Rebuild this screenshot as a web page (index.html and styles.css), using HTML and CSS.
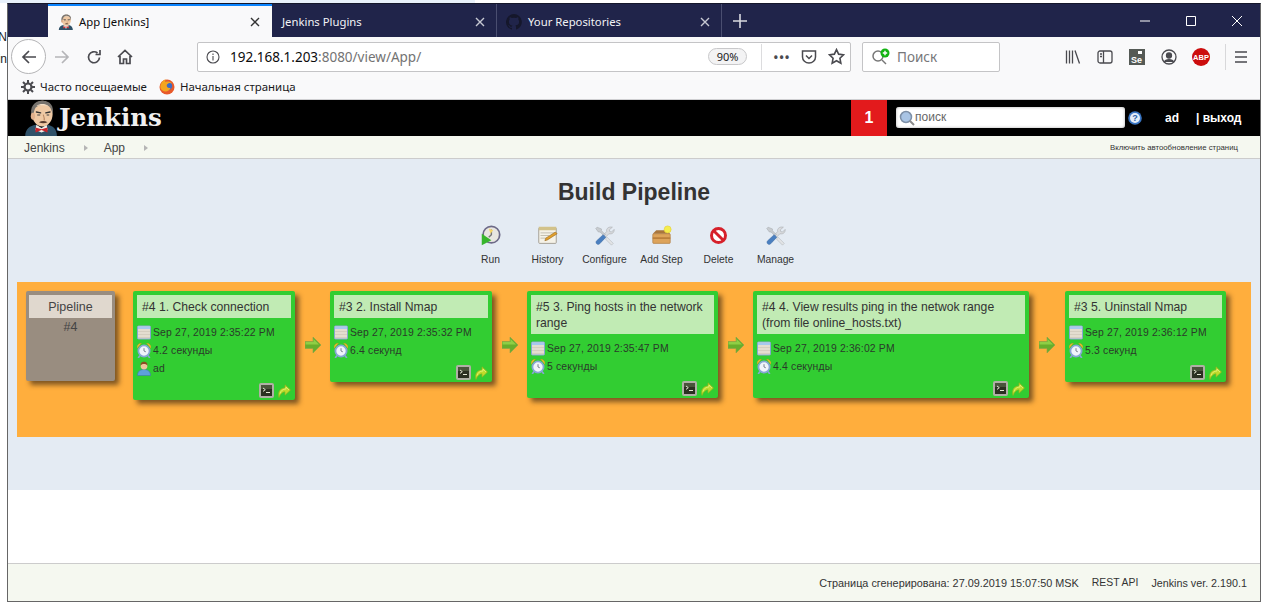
FILE: index.html
```html
<!DOCTYPE html>
<html lang="ru">
<head>
<meta charset="utf-8">
<title>App [Jenkins]</title>
<link rel="stylesheet" href="styles.css">
</head>
<body>
<svg class="defs" width="0" height="0" aria-hidden="true">
  <defs>
    <symbol id="butler" viewBox="0 0 40 42">
      <path d="M1 42c0-8 6-12 12-13l7 3 7-3c6 1 11 5 11 13z" fill="#2f5168"/>
      <path d="M14 29l6 4 6-4 1 6-7 3-7-3z" fill="#f4f1ea"/>
      <path d="M13 32l7 2 7-2v6l-7-3-7 3z" fill="#c8242b"/>
      <ellipse cx="21" cy="16" rx="12" ry="15" fill="#efc9a4"/>
      <path d="M9 21C5 8 12 1 21 1s14 6 12 16c-1-6-3-10-7-11-5-1-10 0-13 3-2 3-2 8-4 12z" fill="#77736e"/>
      <path d="M14 7c4-3 10-3 14 0-5-1-9-1-14 0z" fill="#f4dfc7"/>
      <ellipse cx="10" cy="19" rx="2.500" ry="4" fill="#e0b08c"/>
      <path d="M14 14l5 1M25 15l5-1" stroke="#333" stroke-width="1.500" stroke-linecap="round"/>
      <path d="M15 17.500h3.500M26 17.500h3" stroke="#444" stroke-width="1.200"/>
      <path d="M22 17c1 3 2 5 1 7" stroke="#b78560" stroke-width="1.200" fill="none"/>
      <path d="M17 26c3-2 7-2 10 0-3 1.500-7 1.500-10 0z" fill="#55392b"/>
    </symbol>
    <symbol id="calendar" viewBox="0 0 14 14">
      <rect x=".5" y=".5" width="13" height="13" rx="1" fill="#e4ddd0" stroke="#86a6d0"/>
      <rect x="1" y="1" width="12" height="2.500" fill="#a6c8ee"/>
      <path d="M1 6h12M1 9h12M1 12h12" stroke="#cfc7b8" stroke-width=".7"/>
    </symbol>
    <symbol id="clock" viewBox="0 0 14 15">
      <path d="M0 5.500C-.3 2.500 1.500.2 4.500 0zM14 5.500C14.300 2.500 12.500.2 9.500 0z" fill="#f0bd34" stroke="#c4951c" stroke-width=".4"/>
      <path d="M3 12.500L1.200 15M11 12.500l1.800 2.500" stroke="#86a6d4" stroke-width="1.600"/>
      <circle cx="7" cy="8" r="5.600" fill="#f0f4fa" stroke="#86a6d4" stroke-width="1.800"/>
      <path d="M7 5.200V8l1.800.8" stroke="#78808e" stroke-width="1" fill="none"/>
    </symbol>
    <symbol id="user" viewBox="0 0 14 14">
      <path d="M.5 14c0-4 2.500-6 6.500-6s6.500 2 6.500 6z" fill="#5ea0dc" stroke="#3f78b0" stroke-width=".6"/>
      <circle cx="7" cy="4.500" r="3.400" fill="#f0c49a"/>
      <path d="M3.600 4.500C3.200 1.500 5 .3 7 .3s3.800 1.200 3.400 4.200C10 3 8.500 2.600 7 2.600S4 3 3.600 4.500z" fill="#8a4d22"/>
    </symbol>
    <symbol id="console" viewBox="0 0 15 15">
      <rect width="15" height="15" rx="2" fill="#b0b0a6"/>
      <rect x="2" y="2" width="11" height="11" fill="#2b3021"/>
      <path d="M2 2h11v4H2z" fill="#4a543c"/>
      <path d="M4 5l2.300 1.700L4 8.400" stroke="#e4e8d4" stroke-width="1" fill="none"/>
      <path d="M7 9.500h4" stroke="#e4e8d4" stroke-width="1"/>
    </symbol>
    <symbol id="redo" viewBox="0 0 13 14">
      <path d="M1 13.500C-.5 7.500 2.500 4 7 4V.8l5.500 5.200L7 11.200V7.800C4.500 7.800 2.300 9.800 1 13.500z" fill="#bedc2c" stroke="#93b521" stroke-width=".7"/>
      <path d="M2 9.500C3 6.500 5 5 8 5V3l3 3" fill="none" stroke="#e6f27c" stroke-width=".8"/>
    </symbol>
    <symbol id="flow" viewBox="0 0 16 16">
      <path d="M0 4.500h8V0l8 8-8 8v-4.500H0z" fill="#68ae2c" stroke="#8aa24a" stroke-width=".6"/>
      <path d="M.5 5h8V2l5.500 5.500H.5z" fill="#8fce45"/>
    </symbol>
    <symbol id="tools" viewBox="0 0 24 24">
      <path d="M21 2.500l-3.500 3 .5 2 2 .5 3-3c.5 3-2 6-6 5L8 19.500 5 17 14.500 7.500C13.500 4 17 1.500 21 2.500z" fill="#d9dbde" stroke="#a3a7ab" stroke-width=".6"/>
      <path d="M3.500 2.500L2 4l3 4h2l4.500 4.500 1.500-1.500-4.500-4.500V4.500z" fill="#c8ccd0" stroke="#a3a7ab" stroke-width=".6"/>
      <path d="M10.500 11l3 3-7 7.500c-1 1-2.500 1-3.500 0s-1-2.500 0-3.500z" fill="#4a7fc0" stroke="#38659e" stroke-width=".5"/>
      <path d="M15 14l7 7-2 2-7-7z" fill="#e2e4e6" stroke="#a3a7ab" stroke-width=".5"/>
    </symbol>
  </defs>
</svg>

<div class="top-strip"></div>
<div class="screen">
  <div class="gutter"><span>PN</span><span>in</span></div>
  <div class="window">
    <div class="tabbar">
      <div class="tab-lead"></div>
      <div class="tab active">
        <svg class="tab-icon"><use href="#butler"/></svg>
        <span class="tab-title">App [Jenkins]</span>
        <svg class="tab-close" viewBox="0 0 10 10"><path d="M1 1l8 8M9 1l-8 8"/></svg>
      </div>
      <div class="tab">
        <span class="tab-title">Jenkins Plugins</span>
        <svg class="tab-close" viewBox="0 0 10 10"><path d="M1 1l8 8M9 1l-8 8"/></svg>
      </div>
      <div class="tab">
        <svg class="tab-icon" viewBox="0 0 16 16"><path fill="#15172b" d="M8 0a8 8 0 0 0-2.500 15.600c.4.100.5-.200.500-.400v-1.400c-2.200.500-2.700-1-2.700-1-.400-.900-.900-1.200-.900-1.200-.700-.500.100-.500.100-.500.800.100 1.200.800 1.200.800.700 1.200 1.900.900 2.300.700.100-.500.300-.900.500-1.100-1.800-.200-3.600-.900-3.600-4 0-.900.300-1.600.800-2.100-.100-.200-.400-1 .100-2.100 0 0 .700-.200 2.200.800a7.500 7.500 0 0 1 4 0c1.500-1 2.200-.800 2.200-.800.400 1.100.200 1.900.100 2.100.500.600.800 1.300.800 2.100 0 3.100-1.900 3.700-3.700 3.900.300.300.600.800.600 1.500v2.200c0 .200.100.500.600.400A8 8 0 0 0 8 0z"/></svg>
        <span class="tab-title">Your Repositories</span>
        <svg class="tab-close" viewBox="0 0 10 10"><path d="M1 1l8 8M9 1l-8 8"/></svg>
      </div>
      <div class="tab-new"><svg viewBox="0 0 14 14"><path d="M7 0v14M0 7h14"/></svg></div>
      <div class="win-controls">
        <span class="win-btn"><svg viewBox="0 0 10 10"><path d="M0 5h10"/></svg></span>
        <span class="win-btn"><svg viewBox="0 0 10 10"><path d="M.5.500h9v9h-9z"/></svg></span>
        <span class="win-btn"><svg viewBox="0 0 10 10"><path d="M0 0l10 10M10 0L0 10"/></svg></span>
      </div>
    </div>

    <div class="toolbar">
      <div class="back"><svg viewBox="0 0 16 16"><path d="M15 8H2M8 2L2 8l6 6"/></svg></div>
      <div class="nav-btn faded"><svg viewBox="0 0 16 16"><path d="M1 8h13M8 2l6 6-6 6"/></svg></div>
      <div class="nav-btn"><svg viewBox="0 0 16 16"><path d="M13.500 8.500A5.500 5.500 0 1 1 11.500 4M14 1v4.500H9.500"/></svg></div>
      <div class="nav-btn home"><svg viewBox="0 0 16 16"><path d="M1 8l7-6.500L15 8M3 7v7.500h3.500V10h3v4.500H13V7"/></svg></div>
      <div class="urlbar">
        <svg class="info" viewBox="0 0 14 14"><circle cx="7" cy="7" r="6"/><path d="M7 6v4.500M7 3.500v1.500"/></svg>
        <span class="url"><span class="host">192.168.1.203</span>:8080/view/App/</span>
        <span class="zoom-badge">90%</span>
        <span class="url-sep"></span>
        <span class="dots">•••</span>
        <svg class="pocket" viewBox="0 0 16 16"><path d="M1.500 2h13v6a6.500 6 0 0 1-13 0zM5 6.500l3 3 3-3"/></svg>
        <svg class="star" viewBox="0 0 16 16"><path d="M8 1.500l2 4.300 4.600.6-3.400 3.200.9 4.700L8 12l-4.100 2.300.9-4.700L1.400 6.400 6 5.800z"/></svg>
      </div>
      <div class="searchbar">
        <svg class="search-add" viewBox="0 0 20 18"><circle cx="7" cy="8" r="5" fill="none" stroke="#777" stroke-width="1.500"/><path d="M11 12l4 4" stroke="#777" stroke-width="1.500"/><circle cx="14" cy="5" r="4.500" fill="#12b312"/><path d="M14 2.800v4.400M11.800 5h4.400" stroke="#fff" stroke-width="1.400"/></svg>
        <span>Поиск</span>
      </div>
      <div class="tool-icons">
        <span class="tool"><svg viewBox="0 0 16 16"><path d="M1.500 1.500v13M4.500 1.500v13M7.500 1.500v13M10 1.500l4.500 13"/></svg></span>
        <span class="tool"><svg viewBox="0 0 16 16"><rect x="1" y="2" width="14" height="12" rx="2"/><path d="M6.500 2v12M3 5h2M3 7.500h2"/></svg></span>
        <span class="tool"><svg class="se" viewBox="0 0 16 16"><rect width="16" height="16" fill="#555a55"/><rect x="9" y="2" width="4" height="3" fill="#fff"/><text x="2" y="14" font-size="9" font-weight="700" fill="#fff" font-family="Liberation Sans, sans-serif">Se</text></svg></span>
        <span class="tool"><svg viewBox="0 0 16 16"><circle cx="8" cy="8" r="7"/><circle cx="8" cy="6.500" r="2.500" fill="#4a4a4f"/><path d="M3.500 13c1-3 8-3 9 0" fill="#4a4a4f"/></svg></span>
        <span class="tool"><svg class="abp" viewBox="0 0 18 18"><circle cx="9" cy="9" r="9" fill="#cc0d0d"/><text x="9" y="11.800" font-size="7.500" font-weight="700" text-anchor="middle" fill="#fff" font-family="Liberation Sans, sans-serif">ABP</text></svg></span>
        <span class="tool-sep"></span>
        <span class="tool menu"><svg viewBox="0 0 14 14"><path d="M1 2h12M1 7h12M1 12h12"/></svg></span>
      </div>
    </div>

    <div class="bookmarks">
      <span class="bookmark">
        <svg class="gear" viewBox="0 0 14 14"><circle cx="7" cy="7" r="3.500" fill="none" stroke="#4a4a4f" stroke-width="2.200"/><path d="M7 0v3M7 11v3M0 7h3M11 7h3M2 2l2 2M10 10l2 2M12 2l-2 2M4 10l-2 2" stroke="#4a4a4f" stroke-width="2"/></svg>
        Часто посещаемые
      </span>
      <span class="bookmark">
        <svg class="firefox" viewBox="0 0 16 16"><circle cx="8" cy="8" r="7.500" fill="#e8592a"/><circle cx="9" cy="7" r="4.200" fill="#3d6bc4"/><path d="M2 5c1-3 3-4.500 5-4.500-1 1-1 2-.5 2.500 2-1 5-.5 6.500 1.500-2-1-4-.5-5 1-1 2 1 4 3.500 3.500-1 3-5 4.500-8 2.500C1 10 1 7 2 5z" fill="#f4a51e"/></svg>
        Начальная страница
      </span>
    </div>

    <header class="jk-header">
      <svg class="jk-logo"><use href="#butler"/></svg>
      <span class="jk-name">Jenkins</span>
      <span class="jk-badge">1</span>
      <div class="jk-search">
        <svg viewBox="0 0 16 16"><circle cx="7" cy="7" r="5.500" fill="#a9c4e4" stroke="#7d8fa6" stroke-width="1.500"/><path d="M11 11l4 4" stroke="#8a8a8a" stroke-width="2"/></svg>
        <span>поиск</span>
      </div>
      <svg class="jk-help" viewBox="0 0 14 14"><circle cx="7" cy="7" r="6.800" fill="#3a76c4"/><circle cx="7" cy="7" r="5" fill="#e4edf8"/><text x="7" y="10.300" font-size="9" font-weight="700" text-anchor="middle" fill="#2a5fa8" font-family="Liberation Sans, sans-serif">?</text></svg>
      <span class="jk-user">ad</span>
      <span class="jk-logout">| выход</span>
    </header>

    <nav class="crumbs">
      <span class="crumb">Jenkins</span>
      <i class="crumb-arrow"></i>
      <span class="crumb">App</span>
      <i class="crumb-arrow"></i>
      <span class="auto-refresh">Включить автообновление страниц</span>
    </nav>

    <main class="content">
      <h1 class="page-title">Build Pipeline</h1>
      <div class="actions">
        <div class="action">
          <svg viewBox="0 0 24 24"><circle cx="13" cy="11" r="9.500" fill="#e8e6e0" stroke="#6d6a88" stroke-width="2"/><path d="M13 5v6l-3 3" stroke="#777" stroke-width="1.600" fill="none"/><path d="M10 4l5 2-3 4z" fill="#f5d56a"/><path d="M2 10l11 7.500L2 23z" fill="#37b52c"/></svg>
          <span>Run</span>
        </div>
        <div class="action">
          <svg viewBox="0 0 24 24"><rect x="2" y="3" width="20" height="18" rx="1" fill="#f5f2e8" stroke="#9a968c"/><rect x="2" y="2" width="20" height="4" fill="#d2c28a"/><path d="M4 9h16M4 12h10M4 15h8" stroke="#bdb8aa"/><path d="M9 18l1-3L21 8l2 2-11 7z" fill="#e2a02c" stroke="#8a5a14" stroke-width=".6"/></svg>
          <span>History</span>
        </div>
        <div class="action">
          <svg><use href="#tools"/></svg>
          <span>Configure</span>
        </div>
        <div class="action">
          <svg viewBox="0 0 24 24"><path d="M2 10l4-4h12l4 4z" fill="#a9763c"/><rect x="2" y="10" width="20" height="11" rx="1" fill="#dda35a" stroke="#a9763c" stroke-width=".7"/><rect x="2" y="14" width="20" height="2" fill="#bb7f3b"/><circle cx="19" cy="5" r="4" fill="#f5ee4d" stroke="#e4c92a" stroke-width=".6"/></svg>
          <span>Add Step</span>
        </div>
        <div class="action">
          <svg viewBox="0 0 24 24"><circle cx="12" cy="12" r="8" fill="#fff" stroke="#d6202a" stroke-width="3.400"/><path d="M6.500 6.500l11 11" stroke="#d6202a" stroke-width="3.400"/></svg>
          <span>Delete</span>
        </div>
        <div class="action">
          <svg><use href="#tools"/></svg>
          <span>Manage</span>
        </div>
      </div>

      <div class="pipeline">
        <div class="head-card">
          <div class="head-title">Pipeline</div>
          <div class="head-num">#4</div>
        </div>

        <article class="build w-first">
          <div class="build-title">#4 1. Check connection</div>
          <div class="build-row"><svg><use href="#calendar"/></svg>Sep 27, 2019 2:35:22 PM</div>
          <div class="build-row"><svg><use href="#clock"/></svg>4.2 секунды</div>
          <div class="build-row"><svg><use href="#user"/></svg>ad</div>
          <div class="build-foot"><svg class="ico-console"><use href="#console"/></svg><svg class="ico-redo"><use href="#redo"/></svg></div>
        </article>
        <div class="link"><svg><use href="#flow"/></svg></div>

        <article class="build w-second">
          <div class="build-title">#3 2. Install Nmap</div>
          <div class="build-row"><svg><use href="#calendar"/></svg>Sep 27, 2019 2:35:32 PM</div>
          <div class="build-row"><svg><use href="#clock"/></svg>6.4 секунд</div>
          <div class="build-foot"><svg class="ico-console"><use href="#console"/></svg><svg class="ico-redo"><use href="#redo"/></svg></div>
        </article>
        <div class="link"><svg><use href="#flow"/></svg></div>

        <article class="build w-third">
          <div class="build-title">#5 3. Ping hosts in the network range</div>
          <div class="build-row"><svg><use href="#calendar"/></svg>Sep 27, 2019 2:35:47 PM</div>
          <div class="build-row"><svg><use href="#clock"/></svg>5 секунды</div>
          <div class="build-foot"><svg class="ico-console"><use href="#console"/></svg><svg class="ico-redo"><use href="#redo"/></svg></div>
        </article>
        <div class="link"><svg><use href="#flow"/></svg></div>

        <article class="build w-fourth">
          <div class="build-title">#4 4. View results ping in the netwok range<br>(from file online_hosts.txt)</div>
          <div class="build-row"><svg><use href="#calendar"/></svg>Sep 27, 2019 2:36:02 PM</div>
          <div class="build-row"><svg><use href="#clock"/></svg>4.4 секунды</div>
          <div class="build-foot"><svg class="ico-console"><use href="#console"/></svg><svg class="ico-redo"><use href="#redo"/></svg></div>
        </article>
        <div class="link"><svg><use href="#flow"/></svg></div>

        <article class="build w-fifth">
          <div class="build-title">#3 5. Uninstall Nmap</div>
          <div class="build-row"><svg><use href="#calendar"/></svg>Sep 27, 2019 2:36:12 PM</div>
          <div class="build-row"><svg><use href="#clock"/></svg>5.3 секунд</div>
          <div class="build-foot"><svg class="ico-console"><use href="#console"/></svg><svg class="ico-redo"><use href="#redo"/></svg></div>
        </article>
      </div>
    </main>

    <div class="blank"></div>

    <footer class="jk-footer">
      <span class="gen">Страница сгенерирована: 27.09.2019 15:07:50 MSK</span>
      <span class="rest">REST API</span>
      <span class="ver">Jenkins ver. 2.190.1</span>
    </footer>
  </div>
</div>
</body>
</html>
```
FILE: styles.css
```css
* { box-sizing: border-box; }
html, body { margin: 0; padding: 0; background: #fff; overflow: hidden; }
body { width: 1268px; height: 612px; font-family: "Liberation Sans", Arial, sans-serif; color: #333; }
.defs { position: absolute; }
.top-strip { height: 3px; width: 475px; background: #e8f1fb; }
.screen { display: flex; height: 599px; }
.gutter { width: 7px; overflow: hidden; display: flex; flex-direction: column; font-size: 12px; color: #222; padding-top: 27px; gap: 8px; line-height: 14px; direction: rtl; white-space: nowrap; }
.window { width: 1254px; height: 599px; border: 1px solid #666; border-top: 1px solid #15172b; display: flex; flex-direction: column; }

/* tabs */
.tabbar { height: 33px; background: #20244a; display: flex; flex: none; font-family: "Noto Sans", sans-serif; font-size: 11.3px; color: #f2f2f5; }
.tab-lead { width: 40px; }
.tab { width: 225px; display: flex; align-items: center; padding: 2px 10px 0; border-right: 1px solid #4a4e70; }
.tab.active { width: 224px; background: #f9f9fa; color: #0c0c0d; border-top: 2px solid #0a84ff; border-right: 0; padding-top: 0; }
.tab-icon { width: 16px; height: 16px; flex: none; margin-right: 6px; margin-left: -1px; }
.tab.active .tab-icon { margin-right: 5px; margin-left: 0; }
.tab-title { flex: 1; white-space: nowrap; }
.tab-close { width: 10px; height: 10px; flex: none; margin-right: 1px; fill: none; stroke: #c6c8d2; stroke-width: 1.4; }
.tab.active .tab-close { stroke: #333; margin-right: 2px; }
.tab-new { width: 36px; display: flex; align-items: center; justify-content: center; }
.tab-new svg { width: 14px; height: 14px; fill: none; stroke: #d8d9e0; stroke-width: 1.6; }
.win-controls { margin-left: auto; display: flex; }
.win-btn { width: 46px; display: flex; align-items: center; justify-content: center; }
.win-btn svg { width: 10px; height: 10px; fill: none; stroke: #fff; stroke-width: 1; }

/* toolbar */
.toolbar { height: 39px; background: #f9f9fa; display: flex; align-items: center; padding-left: 3px; flex: none; }
.back { width: 35px; height: 35px; border: 1px solid #b4b4b6; border-radius: 50%; background: #fff; display: flex; align-items: center; justify-content: center; }
.back svg, .nav-btn svg { width: 16px; height: 16px; fill: none; stroke: #4a4a4f; stroke-width: 1.7; }
.nav-btn { width: 32px; height: 32px; display: flex; align-items: center; justify-content: center; }
.nav-btn.faded svg { stroke: #b5b5b8; }
.nav-btn.home { width: 30px; }
.urlbar { margin-left: 57px; width: 654px; height: 30px; background: #fff; border: 1px solid #c4c4c6; border-radius: 2px; display: flex; align-items: center; font-family: "Noto Sans", sans-serif; }
.info { width: 14px; height: 14px; margin-left: 8px; fill: none; stroke: #4a4a4f; stroke-width: 1.1; flex: none; }
.url { margin-left: 10px; padding-top: 1px; font-size: 13.5px; color: #737373; flex: 1; white-space: nowrap; }
.host { color: #0c0c0d; }
.zoom-badge { width: 39px; height: 17px; border: 1px solid #c8c8ca; border-radius: 9px; background: #f3f3f4; font-size: 11px; line-height: 15px; text-align: center; color: #222; }
.url-sep { width: 1px; height: 26px; background: #dcdcde; margin: 0 11px 0 14px; }
.dots { font-size: 15px; line-height: 16px; color: #4a4a4f; width: 17px; white-space: nowrap; }
.pocket { width: 16px; height: 16px; margin-left: 11px; fill: none; stroke: #4a4a4f; stroke-width: 1.5; }
.star { width: 17px; height: 17px; margin: 0 5px 0 11px; fill: none; stroke: #4a4a4f; stroke-width: 1.5; }
.searchbar { margin-left: 11px; width: 138px; height: 30px; background: #fff; border: 1px solid #c4c4c6; border-radius: 2px; display: flex; align-items: center; padding-left: 8px; gap: 6px; font-family: "Noto Sans", sans-serif; font-size: 13.5px; color: #77777a; }
.search-add { width: 20px; height: 18px; flex: none; }
.tool-icons { display: flex; align-items: center; margin-left: 57px; }
.tool { width: 32px; display: flex; align-items: center; justify-content: center; }
.tool svg { width: 16px; height: 16px; fill: none; stroke: #4a4a4f; stroke-width: 1.3; }
.tool svg.se { stroke: none; }
.tool svg.abp { width: 18px; height: 18px; stroke: none; }
.tool-sep { width: 1px; height: 26px; background: #d8d8da; margin-left: 8px; }
.tool.menu { width: 29px; }
.tool.menu svg { width: 14px; height: 14px; stroke-width: 1.7; }

/* bookmarks */
.bookmarks { height: 24px; background: #f9f9fa; border-bottom: 1px solid #cfcfd1; display: flex; align-items: center; padding: 0 0 2px 13px; gap: 12px; font-family: "Noto Sans", sans-serif; font-size: 11.45px; color: #18181a; flex: none; }
.bookmark { display: flex; align-items: center; gap: 5px; white-space: nowrap; }
.gear { width: 14px; height: 14px; }
.firefox { width: 16px; height: 16px; }

/* jenkins header */
.jk-header { height: 36px; background: #000; display: flex; align-items: center; padding-left: 16px; flex: none; color: #fff; }
.jk-logo { width: 35px; height: 36px; flex: none; }
.jk-name { font-family: "DejaVu Serif", serif; font-weight: 700; font-size: 24.5px; line-height: 34px; padding-bottom: 1px; color: #f0f0f0; width: 792px; }
.jk-badge { width: 36px; height: 36px; background: #e31a1c; font: 700 16px/36px "Liberation Sans", sans-serif; text-align: center; flex: none; }
.jk-search { width: 229px; height: 21px; margin: -1px 0 0 9px; background: #fff; border-radius: 3px; display: flex; align-items: center; padding-left: 3px; color: #666; font-size: 12px; box-shadow: inset 0 0 3px #aaa; flex: none; }
.jk-search svg { width: 16px; height: 16px; flex: none; }
.jk-search span { padding-bottom: 1px; }
.jk-help { width: 14px; height: 14px; margin-left: 3px; flex: none; }
.jk-user { font-size: 12px; font-weight: 700; margin-left: 23px; width: 31px; }
.jk-logout { font-size: 12px; font-weight: 700; white-space: nowrap; }

/* breadcrumbs */
.crumbs { height: 23px; background: #f5f8f0; border-bottom: 1px solid #ccc; display: flex; align-items: center; padding: 1px 0 0 16px; font-size: 12px; color: #444; flex: none; }
.crumb-arrow { width: 0; height: 0; border-left: 4px solid #b5b5b5; border-top: 3.5px solid transparent; border-bottom: 3.5px solid transparent; margin: 0 16px 0 19px; }
.auto-refresh { margin-left: auto; margin-right: 22px; font-size: 7.8px; color: #333; white-space: nowrap; }

/* content */
.content { height: 331px; background: #e4ebf3; flex: none; display: flex; flex-direction: column; padding: 0 9px; }
.page-title { margin: 21px 0 0; height: 25px; font-size: 23px; line-height: 25px; text-align: center; color: #333; font-weight: 700; }
.actions { display: flex; justify-content: center; margin-top: 20px; padding-right: 2px; }
.action { width: 57px; display: flex; flex-direction: column; align-items: center; font-size: 10.3px; color: #333; }
.action svg { width: 21px; height: 21px; display: block; }
.action span { margin-top: 8px; line-height: 12px; white-space: nowrap; }

.pipeline { margin-top: 16px; width: 1234px; height: 155px; background: #ffae3d; padding: 9px 0 0 9px; display: flex; align-items: flex-start; }
.head-card { width: 89px; height: 90px; background: #998d80; border-radius: 2px; padding: 4px 3px; box-shadow: 4px 4px 5px rgba(60, 40, 20, .65); text-align: center; margin-right: 18px; flex: none; }
.head-title { height: 23px; background: #e0d8ce; font-size: 12.5px; line-height: 24px; color: #444; }
.head-num { font-size: 12.5px; line-height: 18px; color: #444; }
.build { background: #32cd32; border-radius: 2px; padding: 4px 4px 0; box-shadow: 4px 4px 5px rgba(60, 40, 20, .65); flex: none; }
.w-first, .w-second { width: 162px; }
.w-third { width: 191px; }
.w-fourth { width: 276px; }
.w-fifth { width: 161px; margin-left: 1px; }
.build-title { background: #c1ebb4; padding: 4px 3px 3px 5px; font-size: 12.2px; line-height: 16px; color: #333; margin-bottom: 5px; }
.build-row { display: flex; align-items: center; height: 18px; font-size: 10.4px; color: #2a3a2a; white-space: nowrap; letter-spacing: .17px; }
.build-row svg { width: 14px; height: 15px; flex: none; margin-right: 2px; }
.build-foot { display: flex; justify-content: flex-end; align-items: flex-end; height: 22.5px; padding: 0 0 2px; gap: 4px; }
.ico-console { width: 15px; height: 15px; }
.ico-redo { width: 13px; height: 14px; }
.link { width: 35px; flex: none; display: flex; justify-content: center; padding-top: 46px; }
.link svg { width: 16px; height: 16px; }

.blank { height: 73px; background: #fff; flex: none; }

/* footer */
.jk-footer { flex: 1; background: #f5f8f0; border-top: 1px solid #ccc; display: flex; align-items: center; justify-content: flex-end; padding-right: 13px; font-size: 10.4px; color: #333; gap: 13px; white-space: nowrap; }
.gen { font-size: 10.86px; }
.ver { font-size: 10.75px; }
```
